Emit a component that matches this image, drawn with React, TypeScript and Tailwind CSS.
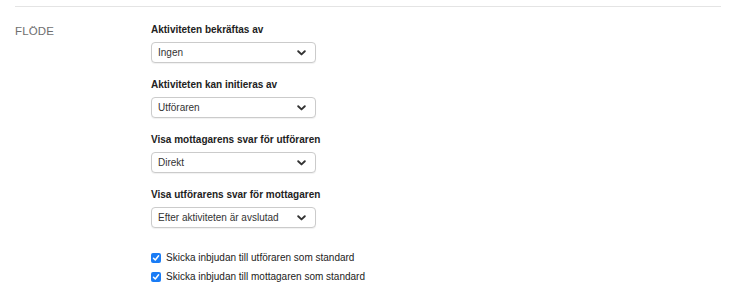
import React from "react";

function Chevron() {
  return (
    <svg width="9" height="6" viewBox="0 0 9 6" className="shrink-0">
      <path d="M1.2 1.2 L4.5 4.4 L7.8 1.2" fill="none" stroke="#333" strokeWidth="1.9" strokeLinecap="round" strokeLinejoin="round" />
    </svg>
  );
}

function SelectField({ label, value }: { label: string; value: string }) {
  return (
    <div className="flex flex-col">
      <div className="text-[10px] leading-[12px] font-bold text-[#222]">{label}</div>
      <div className="mt-[6px] flex h-[21px] w-[165px] items-center justify-between rounded-[4px] border border-[#cbcbcb] bg-white pl-[6px] pr-[9px] shadow-[0_1px_1px_rgba(0,0,0,0.06)]">
        <span className="text-[10px] leading-[12px] text-[#333]">{value}</span>
        <Chevron />
      </div>
    </div>
  );
}

function Check({ label }: { label: string }) {
  return (
    <div className="flex h-[19px] items-center gap-[5px]">
      <span className="flex h-[10px] w-[10px] items-center justify-center rounded-[2px] bg-[#1a7cf5]">
        <svg width="8" height="8" viewBox="0 0 8 8">
          <path d="M1.5 4.2 L3.3 6 L6.6 1.8" fill="none" stroke="#fff" strokeWidth="1.5" strokeLinecap="round" strokeLinejoin="round" />
        </svg>
      </span>
      <span className="text-[10px] leading-[12px] text-[#222]">{label}</span>
    </div>
  );
}

export default function App() {
  return (
    <div className="h-[294px] w-[730px] bg-white" style={{ fontFamily: '"Liberation Sans", Arial, sans-serif' }}>
      <div className="ml-[15px] mr-[9px] pt-[6px]">
        <div className="border-t border-[#e4e4e4]" />
        <div className="flex pt-[17px]">
          <div className="w-[136px] text-[11.5px] leading-[14px] text-[#6f6f6f] tracking-[0.01em]">FLÖDE</div>
          <div className="flex flex-col gap-[16px]">
            <SelectField label="Aktiviteten bekräftas av" value="Ingen" />
            <SelectField label="Aktiviteten kan initieras av" value="Utföraren" />
            <SelectField label="Visa mottagarens svar för utföraren" value="Direkt" />
            <SelectField label="Visa utförarens svar för mottagaren" value="Efter aktiviteten är avslutad" />
            <div className="mt-[4px] flex flex-col">
              <Check label="Skicka inbjudan till utföraren som standard" />
              <Check label="Skicka inbjudan till mottagaren som standard" />
            </div>
          </div>
        </div>
      </div>
    </div>
  );
}
